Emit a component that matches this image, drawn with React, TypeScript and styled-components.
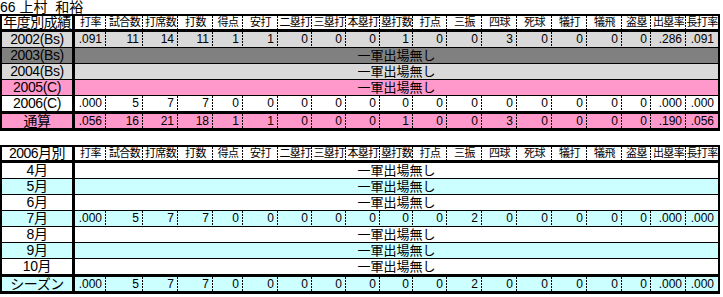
import React from "react";
import styled, { createGlobalStyle } from "styled-components";

const GlobalStyle = createGlobalStyle`
  html, body { margin: 0; padding: 0; background: #fff; }
  body { font-family: "Liberation Sans", "Noto Sans CJK JP", sans-serif; color: #000; }
`;

const COLS = [31, 37, 35, 35, 30, 35, 34, 34, 34, 33, 34, 35, 35, 35, 35, 35, 29, 35, 32];
const GRID = `73px ${COLS.map((c) => c + "px").join(" ")}`;

const HEADERS = ["打率", "試合数", "打席数", "打数", "得点", "安打", "二塁打", "三塁打", "本塁打", "塁打数", "打点", "三振", "四球", "死球", "犠打", "犠飛", "盗塁", "出塁率", "長打率"];

const NONE = "一軍出場無し";

type RowData = { label: string; bg: string; values?: string[]; h?: number; line?: number };

const yearRows: RowData[] = [
  { label: "2002(Bs)", bg: "#d9d9d9", values: [".091", "11", "14", "11", "1", "1", "0", "0", "0", "1", "0", "0", "3", "0", "0", "0", "0", ".286", ".091"] },
  { label: "2003(Bs)", bg: "#808080" },
  { label: "2004(Bs)", bg: "#d9d9d9" },
  { label: "2005(C)", bg: "#ff99cc" },
  { label: "2006(C)", bg: "#ffffff", values: [".000", "5", "7", "7", "0", "0", "0", "0", "0", "0", "0", "0", "0", "0", "0", "0", "0", ".000", ".000"], line: 3 },
  { label: "通算", bg: "#ff99cc", values: [".056", "16", "21", "18", "1", "1", "0", "0", "0", "1", "0", "0", "3", "0", "0", "0", "0", ".190", ".056"], h: 14, line: 0 },
];

const july = [".000", "5", "7", "7", "0", "0", "0", "0", "0", "0", "0", "2", "0", "0", "0", "0", "0", ".000", ".000"];
const CYAN = "#ccffff";
const monthRows: RowData[] = [
  { label: "4月", bg: "#ffffff" },
  { label: "5月", bg: CYAN },
  { label: "6月", bg: "#ffffff" },
  { label: "7月", bg: CYAN, values: july },
  { label: "8月", bg: "#ffffff" },
  { label: "9月", bg: CYAN },
  { label: "10月", bg: "#ffffff", line: 3 },
  { label: "シーズン", bg: CYAN, values: july, h: 14, line: 0 },
];

const Page = styled.div`
  width: 723px;
`;

const Title = styled.div`
  height: 14px;
  font-size: 14px;
  line-height: 14px;
  white-space: pre;
`;

const Table = styled.div<{ $gap?: number }>`
  box-sizing: border-box;
  width: 720px;
  border: 2px solid #000;
  border-bottom-width: 3px;
  margin-top: ${(p) => p.$gap ?? 0}px;
`;

const Row = styled.div<{ $bg: string; $h: number; $line: number }>`
  display: grid;
  grid-template-columns: ${GRID};
  height: ${(p) => p.$h}px;
  line-height: ${(p) => p.$h}px;
  background: ${(p) => p.$bg};
  border-bottom: ${(p) => p.$line}px solid #000;
`;

const Label = styled.div<{ $size?: number; $ls?: number }>`
  box-sizing: border-box;
  border-right: 3px solid #000;
  text-align: center;
  font-size: ${(p) => p.$size ?? 14}px;
  letter-spacing: ${(p) => p.$ls ?? 0}px;
  white-space: nowrap;
`;

const Cell = styled.div<{ $last?: boolean; $head?: boolean }>`
  box-sizing: border-box;
  font-size: ${(p) => (p.$head ? 11 : 12)}px;
  letter-spacing: ${(p) => (p.$head ? -0.6 : 0)}px;
  text-align: ${(p) => (p.$head ? "center" : "right")};
  padding-right: ${(p) => (p.$head ? 0 : 4)}px;
  white-space: nowrap;
  overflow: hidden;
  background-image: ${(p) => (p.$last ? "none" : "linear-gradient(#000 67%, transparent 67%)")};
  background-size: 1px 3px;
  background-position: right top;
  background-repeat: repeat-y;
`;

const Merged = styled.div`
  grid-column: 2 / -1;
  text-align: center;
  font-size: 13px;
`;

function HeaderRow({ first }: { first: string }) {
  return (
    <Row $bg="#fff" $h={13} $line={3}>
      <Label $size={14} $ls={-0.5}>{first}</Label>
      {HEADERS.map((h, i) => (
        <Cell key={h} $head $last={i === HEADERS.length - 1}>
          {h}
        </Cell>
      ))}
    </Row>
  );
}

function DataRow({ r }: { r: RowData }) {
  const h = r.h ?? 15;
  return (
    <Row $bg={r.bg} $h={h} $line={r.line ?? 1}>
      <Label $size={14} $ls={-0.4}>{r.label}</Label>
      {r.values ? (
        r.values.map((v, i) => (
          <Cell key={i} $last={i === r.values!.length - 1}>
            {v}
          </Cell>
        ))
      ) : (
        <Merged>{NONE}</Merged>
      )}
    </Row>
  );
}

export default function App() {
  return (
    <Page>
      <GlobalStyle />
      <Title>{"66 上村  和裕"}</Title>
      <Table>
        <HeaderRow first="年度別成績" />
        {yearRows.map((r) => (
          <DataRow key={r.label} r={r} />
        ))}
      </Table>
      <Table $gap={14}>
        <HeaderRow first="2006月別" />
        {monthRows.map((r) => (
          <DataRow key={r.label} r={r} />
        ))}
      </Table>
    </Page>
  );
}
